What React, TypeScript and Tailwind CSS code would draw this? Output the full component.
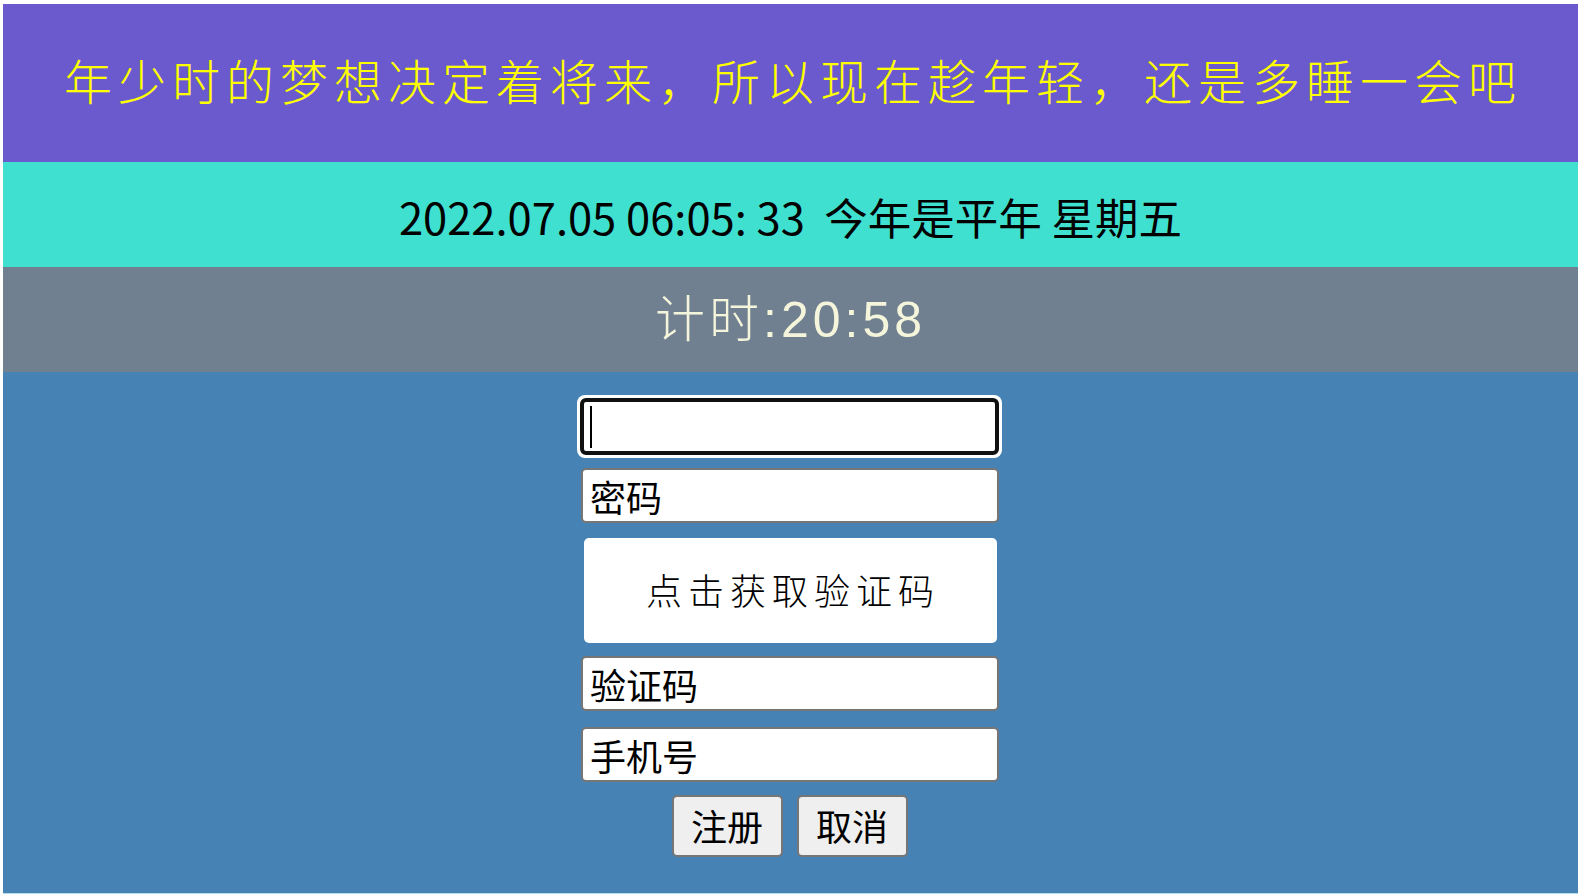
function Field({ label }: { label: string }) {
  return (
    <input
      readOnly
      placeholder={label}
      className="block w-[418px] h-[55px] mr-[1px] pl-[7px] bg-white border-2 border-[#767676] rounded-[5px] text-[36px] leading-none text-black placeholder:text-black outline-none font-['Noto_Sans_CJK_SC',sans-serif]"
    />
  );
}

export default function App() {
  return (
    <div className="h-[894px] bg-white pt-[4px] pl-[3px] pr-[3px] font-['Noto_Sans_CJK_SC',sans-serif]">
      <div className="h-full flex flex-col bg-[#4682B4] border-b border-[#B5DDF2]">
        <div className="h-[158px] shrink-0 bg-[#6A5ACD] flex items-center justify-center pb-[8px] pl-[5px]">
          <h1 className="text-[48px] font-light leading-none tracking-[6px] text-[#FFFF00] whitespace-nowrap">
            年少时的梦想决定着将来，所以现在趁年轻，还是多睡一会吧
          </h1>
        </div>
        <div className="h-[105px] shrink-0 bg-[#40E0D0] flex items-center justify-center pt-[4px] text-[43.5px] leading-none text-black whitespace-pre">
          2022.07.05 06:05: 33{"  "}今年是平年 星期五
        </div>
        <div className="h-[105px] shrink-0 bg-[#708090] flex items-center justify-center text-[50px] font-light leading-none tracking-[4px] text-[#F5F5DC] font-['Liberation_Sans','Noto_Sans_CJK_SC',sans-serif]">
          计时:20:58
        </div>
        <div className="flex-1 flex flex-col items-center">
          <div className="mt-[23px] mr-[2px] w-[425px] h-[63px] rounded-[8px] bg-white p-[3px]">
            <div className="h-full rounded-[6px] border-[4px] border-[#101010] bg-white flex items-center pl-[6px]">
              <span className="block w-[2px] h-[42px] bg-black" />
            </div>
          </div>
          <div className="mt-[10px]">
            <Field label="密码" />
          </div>
          <div className="mt-[15px] mr-[1px] w-[413px] h-[105px] rounded-[5px] bg-white flex items-center justify-center pb-[3px] pl-[6px] text-[36px] font-light leading-none tracking-[6px] text-black">
            点击获取验证码
          </div>
          <div className="mt-[13px]">
            <Field label="验证码" />
          </div>
          <div className="mt-[16px]">
            <Field label="手机号" />
          </div>
          <div className="mt-[13px] mr-[2px] flex gap-[14px]">
            <button className="w-[111px] h-[62px] pb-[2px] bg-[#EFEFEF] border-2 border-[#767676] rounded-[5px] text-[36px] leading-none text-black">注册</button>
            <button className="w-[111px] h-[62px] pb-[2px] bg-[#EFEFEF] border-2 border-[#767676] rounded-[5px] text-[36px] leading-none text-black">取消</button>
          </div>
        </div>
      </div>
    </div>
  );
}
